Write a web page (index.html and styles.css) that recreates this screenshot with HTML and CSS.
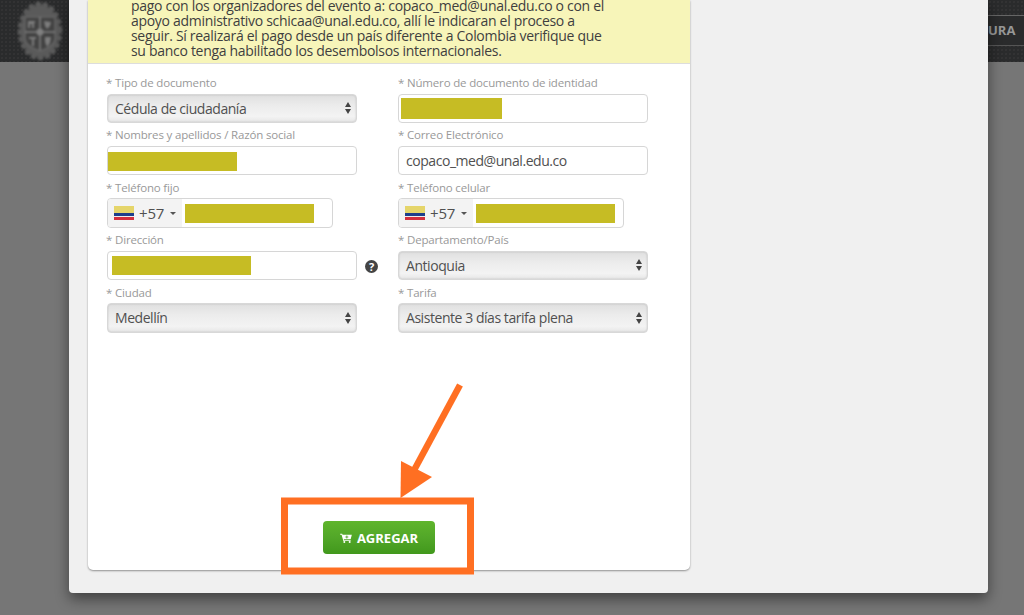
FILE: index.html
```html
<!DOCTYPE html>
<html lang="es">
<head>
<meta charset="utf-8">
<title>Registro</title>
<link rel="stylesheet" href="styles.css">
</head>
<body>
<header class="topbar">
  <svg class="crest" viewBox="0 0 50 62" width="50" height="62" aria-hidden="true">
    <ellipse cx="25" cy="31" rx="19" ry="26" fill="#5a5a5a"/>
    <ellipse class="crest-wreath" cx="25" cy="31" rx="19.500" ry="26.500"/>
    <path d="M10 17 H40 V38 Q40 46 25 51 Q10 46 10 38 Z" fill="#424242" stroke="#666" stroke-width="1.500"/>
    <path d="M25 17 V50 M10 32 H40" stroke="#808080" stroke-width="1.500"/>
    <circle cx="25" cy="32" r="3.500" fill="#808080"/>
    <path d="M13 21 h7 v2 h-1 v5 h-2 v-4 h-2 v4 h-2 Z M29 21 l7 1 -1 4 -3 3 -2 -3 Z M14 37 h7 v2 h-2 v7 h-2 v-7 h-3 Z M30 37 l6 0 -1 6 -3 4 -2 -5 Z" fill="#7d7d7d"/>
  </svg>
  <span class="menu-end">URA</span>
</header>

<main class="modal">
  <section class="card">
    <div class="notice">
      <p>pago con los organizadores del evento a: copaco_med@unal.edu.co o con el<br>apoyo administrativo schicaa@unal.edu.co, allí le indicaran el proceso a<br>seguir. Sí realizará el pago desde un país diferente a Colombia verifique que<br>su banco tenga habilitado los desembolsos internacionales.</p>
    </div>
    <form class="form">
      <div class="field">
        <label>* Tipo de documento</label>
        <div class="select"><span>Cédula de ciudadanía</span><svg class="updown" viewBox="0 0 6 12" width="6" height="12"><path d="M3 0 6 5H0Z M3 12 0 7h6Z"/></svg></div>
      </div>
      <div class="field">
        <label>* Número de documento de identidad</label>
        <div class="input"><i class="mask mask-doc"></i></div>
      </div>
      <div class="field">
        <label>* Nombres y apellidos / Razón social</label>
        <div class="input"><i class="mask mask-name"></i></div>
      </div>
      <div class="field">
        <label>* Correo Electrónico</label>
        <div class="input"><span>copaco_med@unal.edu.co</span></div>
      </div>
      <div class="field">
        <label>* Teléfono fijo</label>
        <div class="phone">
          <div class="dial"><span class="flag"></span><span>+57</span><span class="caret"></span></div>
          <i class="mask mask-tel"></i>
        </div>
      </div>
      <div class="field">
        <label>* Teléfono celular</label>
        <div class="phone">
          <div class="dial"><span class="flag"></span><span>+57</span><span class="caret"></span></div>
          <i class="mask mask-cel"></i>
        </div>
      </div>
      <div class="field">
        <label>* Dirección</label>
        <div class="input"><i class="mask mask-addr"></i></div>
        <span class="help">?</span>
      </div>
      <div class="field">
        <label>* Departamento/País</label>
        <div class="select"><span>Antioquia</span><svg class="updown" viewBox="0 0 6 12" width="6" height="12"><path d="M3 0 6 5H0Z M3 12 0 7h6Z"/></svg></div>
      </div>
      <div class="field">
        <label>* Ciudad</label>
        <div class="select"><span>Medellín</span><svg class="updown" viewBox="0 0 6 12" width="6" height="12"><path d="M3 0 6 5H0Z M3 12 0 7h6Z"/></svg></div>
      </div>
      <div class="field">
        <label>* Tarifa</label>
        <div class="select"><span>Asistente 3 días tarifa plena</span><svg class="updown" viewBox="0 0 6 12" width="6" height="12"><path d="M3 0 6 5H0Z M3 12 0 7h6Z"/></svg></div>
      </div>
    </form>
    <div class="actions">
      <button class="add" type="button">
        <svg viewBox="0 0 14 12" width="12" height="10"><path d="M0 1h2.400l.5 1.200H14l-1.400 5.300H4.300l.3 1.100h8v1H3.800L1.700 2H0Z" fill="#fff"/><circle cx="5" cy="10.800" r="1.200" fill="#fff"/><circle cx="11.400" cy="10.800" r="1.200" fill="#fff"/><path d="M8 3v3.600M6.200 4.800h3.600" stroke="#4c9f22" stroke-width="1"/></svg>
        AGREGAR
      </button>
    </div>
  </section>
</main>

<svg class="annotation" viewBox="0 0 1024 615" width="1024" height="615" aria-hidden="true">
  <path d="M460 385 L412 474" stroke="#ff6f22" stroke-width="6.500" fill="none"/>
  <path d="M400.500 498 L401 461 L432 477 Z" fill="#ff6f22"/>
  <rect x="284.500" y="501" width="186" height="70" fill="none" stroke="#ff6f22" stroke-width="7"/>
</svg>
</body>
</html>
```
FILE: styles.css
```css
* { box-sizing: border-box; }
html, body { margin: 0; height: 615px; overflow: hidden; }
body {
  background: #767676;
  font-family: "Open Sans", sans-serif;
  color: #555;
  position: relative;
}
.topbar {
  height: 62px;
  background-color: #2a2b2c;
  background-image: radial-gradient(#3b3b3b 0.6px, transparent 0.8px);
  background-size: 4px 4px;
  position: relative;
}
.crest { position: absolute; left: 15px; top: 0; filter: blur(.8px); }
.crest-wreath {
  fill: none;
  stroke: #5a5a5a;
  stroke-width: 6;
  stroke-linecap: round;
  stroke-dasharray: 0.1 7;
}
.menu-end {
  position: absolute;
  left: 988px;
  right: 0;
  top: 15px;
  height: 31px;
  line-height: 29px;
  border-top: 1px solid #666;
  border-bottom: 1px solid #555;
  color: #979797;
  font-weight: 700;
  font-size: 13px;
  background: #2a2b2c;
}
.modal {
  position: absolute;
  left: 69px;
  top: 0;
  width: 919px;
  height: 593px;
  background: #f0f0f0;
  border-radius: 0 0 4px 4px;
  box-shadow: 0 6px 14px rgba(0,0,0,.45);
  padding-left: 19px;
}
.card {
  width: 602px;
  height: 570px;
  background: #fff;
  border-radius: 0 0 5px 5px;
  box-shadow: 0 1px 2px rgba(0,0,0,.4);
  display: flex;
  flex-direction: column;
}
.notice {
  height: 64px;
  flex: none;
  background: #f7f5b9;
  border-bottom: 1px solid #ddd;
  padding-left: 43px;
  overflow: hidden;
}
.notice p {
  margin: -2px 0 0;
  font-size: 14px;
  line-height: 15px;
  letter-spacing: -.3px;
  color: #3f3f3f;
  white-space: nowrap;
}
.form {
  display: grid;
  grid-template-columns: 250px 250px;
  column-gap: 41px;
  grid-auto-rows: 52.4px;
  padding: 11px 0 0 19px;
  flex: none;
}
.field { position: relative; }
.field label {
  display: block;
  height: 18.5px;
  line-height: 15px;
  font-size: 11.5px;
  letter-spacing: -.17px;
  margin-left: -1px;
  color: #999;
}
.field:nth-child(even) label { margin-left: 0; }
.input, .select, .phone {
  height: 29.5px;
  border: 1px solid #d6d6d6;
  border-radius: 4px;
  background: #fff;
  font-size: 14px;
  letter-spacing: -.45px;
  color: #505050;
  display: flex;
  align-items: center;
}
.input { padding: 0 7px; }
.select {
  justify-content: space-between;
  padding: 0 5px 0 7px;
  background: linear-gradient(#e0e0e0, #ececec 40%, #f3f3f3 80%, #e6e6e6);
  border-color: #d8d8d8;
  box-shadow: inset 0 0 2px rgba(0,0,0,.18);
}
.updown { fill: #444; flex: none; }
.phone { width: 226px; overflow: hidden; }
.dial {
  height: 100%;
  width: 74px;
  flex: none;
  background: #f3f3f3;
  display: flex;
  align-items: center;
  padding-left: 6px;
  gap: 5px;
  font-size: 15px;
  letter-spacing: -.2px;
}
.flag {
  width: 20px;
  height: 14px;
  background: linear-gradient(#e5d56a 0 50%, #1d3f8c 50% 73%, #eee 73% 78%, #d32f3d 78%);
}
.caret {
  width: 0;
  height: 0;
  border: 3px solid transparent;
  border-top: 3px solid #555;
  border-bottom: 0;
  margin-left: 1px;
}
.mask { display: block; background: #c6bc24; flex: none; }
.mask-doc { width: 101px; height: 21px; margin-left: -5px; }
.mask-name { width: 129px; height: 19px; margin: 2px 0 0 -7px; }
.mask-tel { width: 129px; height: 19px; margin-left: 3px; }
.mask-cel { width: 139px; height: 19px; margin-left: 3px; }
.mask-addr { width: 139px; height: 19px; margin-left: -3px; }
.help {
  position: absolute;
  left: 258px;
  top: 28px;
  width: 13px;
  height: 13px;
  border-radius: 50%;
  background: #444;
  color: #fff;
  font: 700 11px/13px "Open Sans", sans-serif;
  text-align: center;
}
.actions {
  flex: 1;
  display: flex;
  align-items: flex-end;
  justify-content: center;
  padding: 0 0 16px 0;
}
.add {
  margin-left: -20px;
  width: 112px;
  height: 33px;
  border: 0;
  border-radius: 4px;
  background: linear-gradient(#5fb52c, #52a728 50%, #41981c);
  color: #fff;
  font: 700 13px "Open Sans", sans-serif;
  display: flex;
  align-items: center;
  justify-content: center;
  gap: 5px;
}
.annotation { position: absolute; left: 0; top: 0; pointer-events: none; }
```
